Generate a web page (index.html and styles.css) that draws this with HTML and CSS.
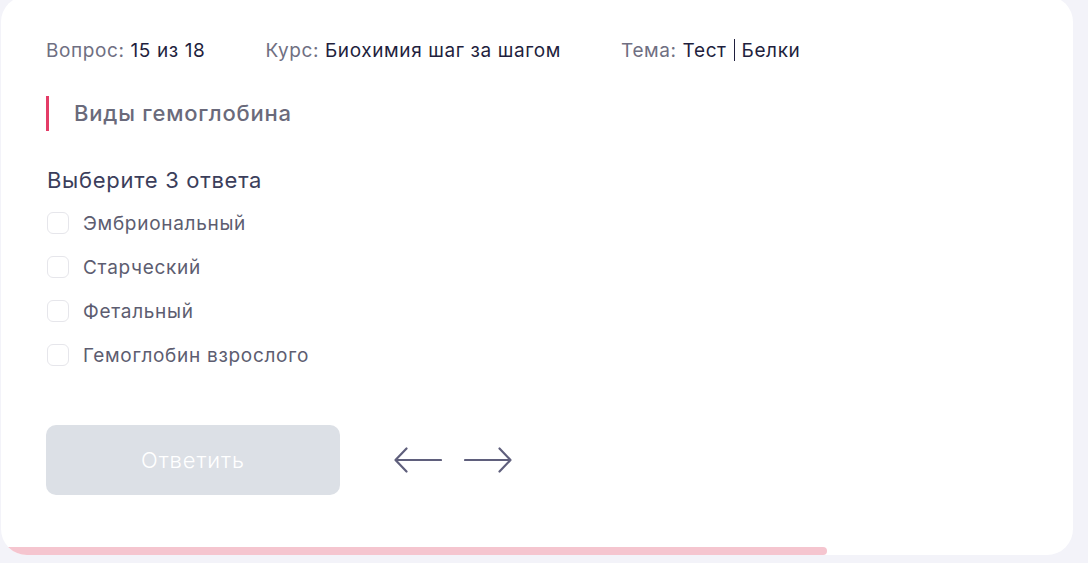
FILE: index.html
```html
<!DOCTYPE html>
<html lang="ru">
<head>
<meta charset="utf-8">
<title>Вопрос</title>
<link rel="stylesheet" href="styles.css">
</head>
<body>
<main class="card">
  <div class="card-body">
    <div class="meta">
      <div class="meta-item"><span class="meta-label">Вопрос: </span><span class="meta-value">15 из 18</span></div>
      <div class="meta-item"><span class="meta-label">Курс: </span><span class="meta-value">Биохимия шаг за шагом</span></div>
      <div class="meta-item"><span class="meta-label">Тема: </span><span class="meta-value">Тест</span><span class="meta-sep"></span><span class="meta-value">Белки</span></div>
    </div>
    <h1 class="title">Виды гемоглобина</h1>
    <p class="question">Выберите 3 ответа</p>
    <ul class="options">
      <li class="option"><span class="checkbox"></span><span class="option-text">Эмбриональный</span></li>
      <li class="option"><span class="checkbox"></span><span class="option-text">Старческий</span></li>
      <li class="option"><span class="checkbox"></span><span class="option-text">Фетальный</span></li>
      <li class="option"><span class="checkbox"></span><span class="option-text">Гемоглобин взрослого</span></li>
    </ul>
    <div class="actions">
      <button class="submit" type="button">Ответить</button>
      <div class="arrows">
        <svg class="arrow" width="48" height="26" viewBox="0 0 48 26" aria-hidden="true"><path d="M47 13H1.5M12.5 1.5L1.5 13l11 11.5" fill="none" stroke="#5f5f7c" stroke-width="2.2" stroke-linecap="round" stroke-linejoin="round"/></svg>
        <svg class="arrow" width="48" height="26" viewBox="0 0 48 26" aria-hidden="true"><path d="M1 13h45.5M35.5 1.5L46.5 13l-11 11.5" fill="none" stroke="#5f5f7c" stroke-width="2.2" stroke-linecap="round" stroke-linejoin="round"/></svg>
      </div>
    </div>
  </div>
  <div class="progress"><div class="progress-fill" style="width:826px"></div></div>
</main>
</body>
</html>
```
FILE: styles.css
```css
html, body {
  margin: 0;
  padding: 0;
}
body {
  background: #f3f3f9;
  font-family: "Inter", "Roboto", "Liberation Sans", sans-serif;
  width: 1088px;
  height: 563px;
  overflow: hidden;
}
.card {
  margin: -4px 0 0 1px;
  width: 1072px;
  height: 559px;
  background: #ffffff;
  border-radius: 26px;
  overflow: hidden;
  display: flex;
  flex-direction: column;
  box-sizing: border-box;
}
.card-body {
  padding: 43px 0 0 45px;
  display: flex;
  flex-direction: column;
}
.meta {
  display: flex;
  gap: 60px;
  font-size: 19px;
  line-height: 24px;
  letter-spacing: 0.6px;
}
.meta-item {
  white-space: pre;
}
.meta-label {
  color: #6f6f82;
}
.meta-value {
  color: #1f1f3e;
}
.meta-sep {
  display: inline-block;
  vertical-align: middle;
  width: 1px;
  height: 22px;
  background: #1f1f3e;
  margin: -3px 7px 0 7px;
}
.title {
  margin: 33px 0 0 0;
  padding-left: 25px;
  border-left: 3px solid #e43c67;
  font-size: 22px;
  line-height: 35px;
  font-weight: 500;
  color: #6a6a7b;
  letter-spacing: 0.8px;
}
.question {
  margin: 36px 0 0 1px;
  font-size: 22px;
  line-height: 26px;
  color: #3b3e5b;
  letter-spacing: 0.7px;
}
.options {
  list-style: none;
  margin: 19px 0 0 0;
  padding: 0;
  display: flex;
  flex-direction: column;
  gap: 22px;
}
.option {
  display: flex;
  align-items: center;
  height: 22px;
}
.checkbox {
  width: 20px;
  height: 20px;
  border: 1px solid #e6e6eb;
  border-radius: 6px;
  margin-left: 1px;
  flex-shrink: 0;
}
.option-text {
  margin-left: 14px;
  font-size: 19px;
  line-height: 24px;
  padding-top: 1px;
  color: #5d5d70;
  letter-spacing: 0.7px;
}
.actions {
  margin-top: 59px;
  display: flex;
  align-items: center;
  gap: 54px;
}
.submit {
  width: 294px;
  height: 70px;
  border: none;
  border-radius: 10px;
  background: #dce0e6;
  color: #ffffff;
  font-family: inherit;
  font-size: 22px;
  font-weight: 300;
  letter-spacing: 0.9px;
  padding: 0;
}
.arrows {
  display: flex;
  gap: 22px;
  align-items: center;
}
.arrow {
  display: block;
}
.progress {
  margin-top: auto;
  height: 8px;
  flex-shrink: 0;
}
.progress-fill {
  height: 8px;
  background: #f5c5cf;
  border-radius: 0 4px 4px 0;
}
```
